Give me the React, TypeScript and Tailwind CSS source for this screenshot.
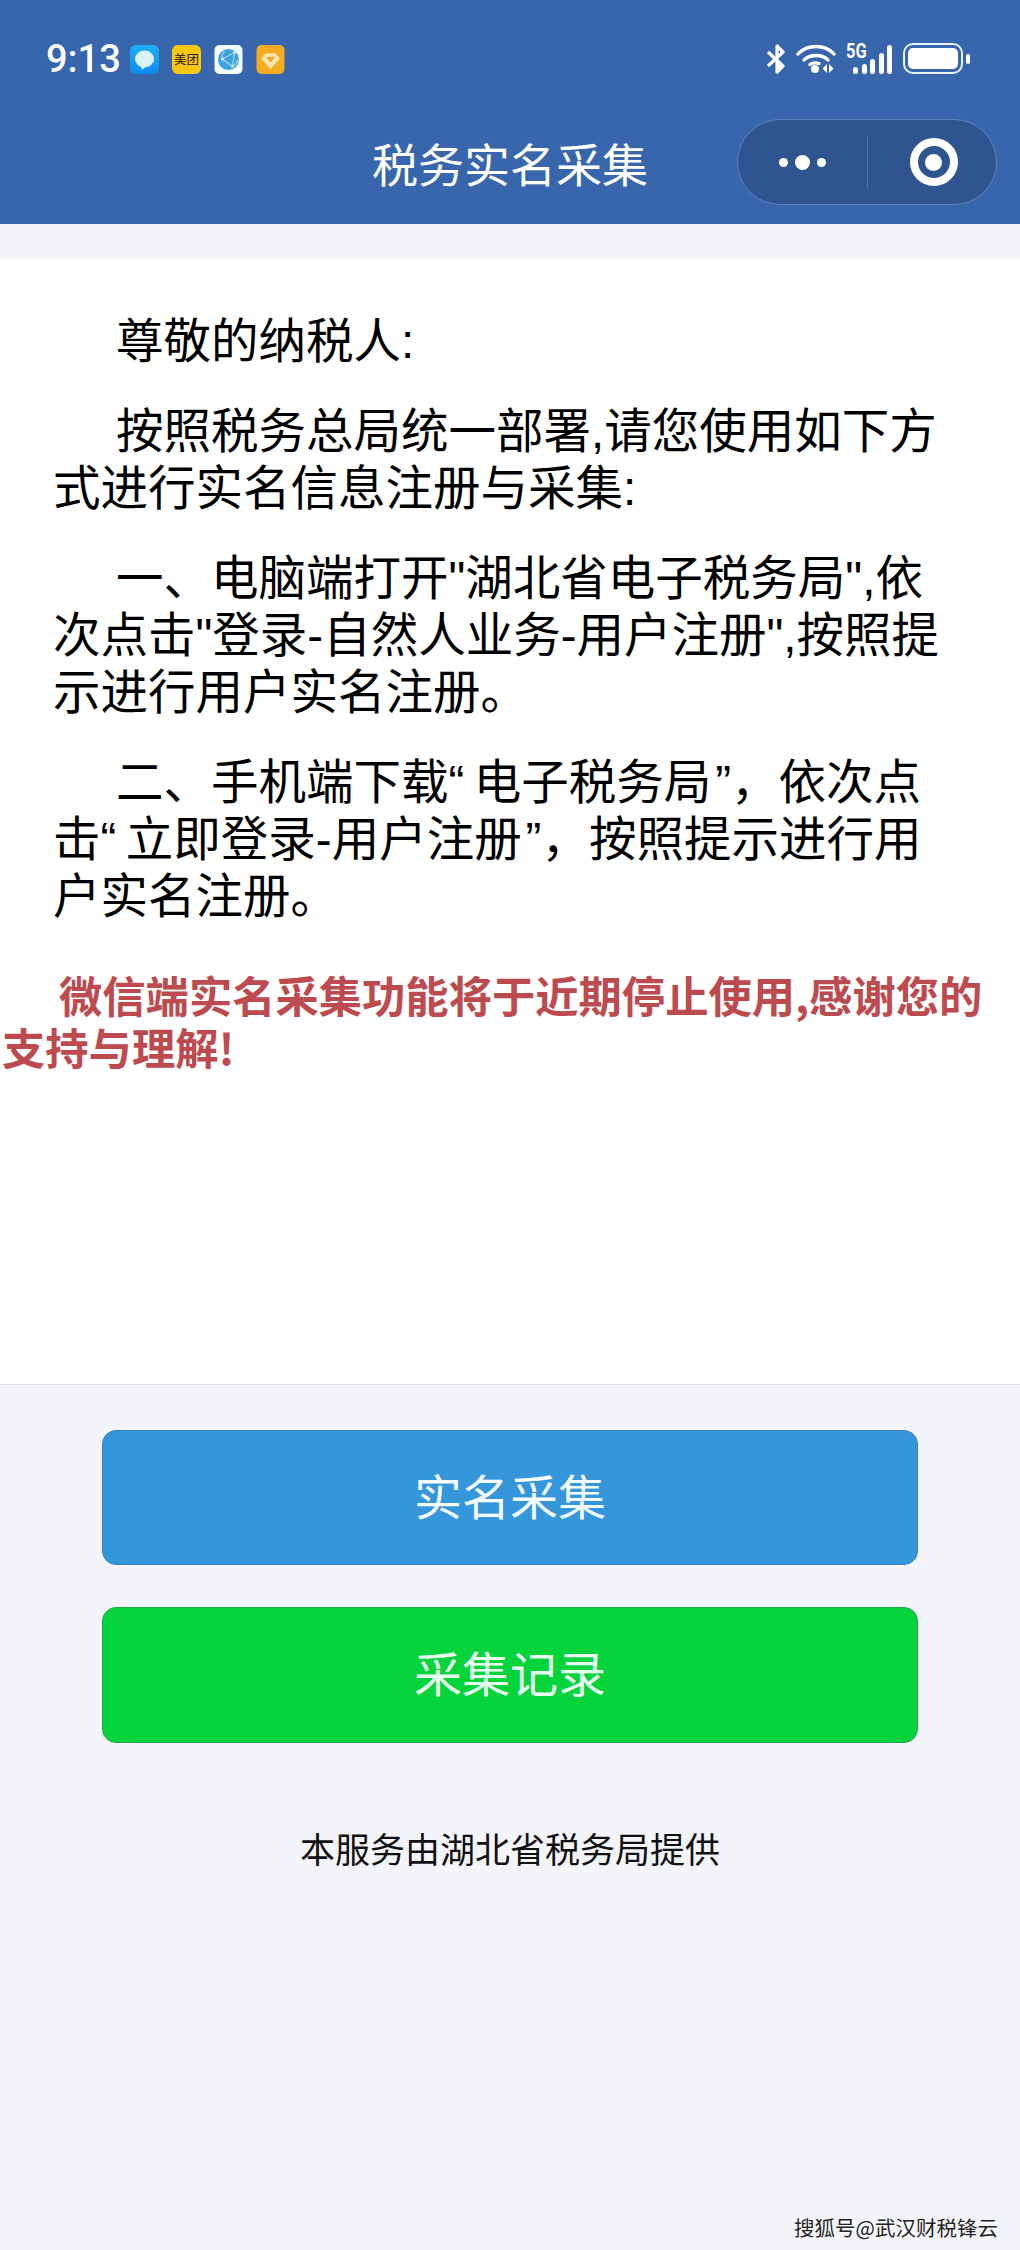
import React from 'react';

const cjk = "font-['Noto_Sans_CJK_SC','Noto_Sans',sans-serif]";

const NoticeIcons = () => (
  <div className="flex gap-[13px]">
    {/* message */}
    <svg width="29" height="29" viewBox="0 0 29 29">
      <defs>
        <linearGradient id="msg" x1="0" y1="0" x2="0" y2="1">
          <stop offset="0" stopColor="#1fb0f8" />
          <stop offset="1" stopColor="#0a8cf0" />
        </linearGradient>
      </defs>
      <rect width="29" height="29" rx="6" fill="url(#msg)" />
      <ellipse cx="14.500" cy="14" rx="9.500" ry="8.500" fill="#d8f1fb" />
      <path d="M10 20l2 4.500 4-2.500z" fill="#d8f1fb" />
    </svg>
    {/* meituan */}
    <div className={`w-[29px] h-[29px] rounded-[6px] bg-[#fcc70f] flex items-center justify-center text-[12.500px] leading-none text-[#2a1200] ${cjk}`}>
      美团
    </div>
    {/* browser */}
    <svg width="29" height="29" viewBox="0 0 28 29">
      <rect width="28" height="29" rx="5" fill="#f4fbfe" />
      <circle cx="14" cy="14.500" r="10.500" fill="#3ba4dc" />
      <path d="M20 7.500L8 14l10 7.500zM8 14c-1-3 0-6 2-7.500M18 21.500c3-1.500 5-4 5-7" fill="none" stroke="#9fd3ec" strokeWidth="1.300" />
      <circle cx="8" cy="14" r="1.500" fill="#e6f5fb" />
      <circle cx="20" cy="7.500" r="1.200" fill="#e6f5fb" />
      <circle cx="18" cy="21.500" r="1.200" fill="#e6f5fb" />
    </svg>
    {/* wallet */}
    <svg width="29" height="29" viewBox="0 0 28 29">
      <rect width="28" height="29" rx="5" fill="#f3ab1f" />
      <path d="M9.500 9h9l4 4.500L14 23 5.500 13.500z" fill="#fde6ad" strokeLinejoin="round" stroke="#fde6ad" strokeWidth="1.500" />
      <path d="M10.500 12.500h7L14 17z" fill="#f3a31c" strokeLinejoin="round" stroke="#f3a31c" strokeWidth="1" />
    </svg>
  </div>
);

const signalBars = ['h-[7px]', 'h-[10px]', 'h-[15px]', 'h-[21px]', 'h-[29px]'];

const StatusIcons = () => (
  <div className="flex items-center">
    {/* bluetooth */}
    <svg width="20" height="30" viewBox="0 0 20 30" className="mr-[10px]" fill="none" stroke="#fff" strokeWidth="3.200" strokeLinejoin="round">
      <path d="M2 8l15 14-6 6V2l6 6L2 22" />
      <path d="M12 18l4 4-4 4z" fill="#fff" stroke="none" />
    </svg>
    {/* wifi */}
    <svg width="40" height="30" viewBox="0 0 40 30" className="mr-[11px]" fill="none" stroke="#fff" strokeWidth="3.300" strokeLinecap="round">
      <path d="M2 10C11 0 29 0 38 10" />
      <path d="M8 16c6-6 18-6 24 0" />
      <path d="M14 20.500c2-1.500 6-2 9-1" />
      <circle cx="19" cy="25" r="4" fill="#fff" stroke="none" />
      <path d="M31 20l-4.500 4.500L31 29zM33 20l4.500 4.500L33 29z" fill="#fff" stroke="none" />
    </svg>
    {/* 5G + signal */}
    <div className="relative w-[45px] h-[30px] mr-[11px]">
      <span className="absolute -left-[1px] -top-[1px] text-[20px] leading-[17px] font-bold text-white font-['Roboto',sans-serif] scale-x-[0.82] origin-left">5G</span>
      <div className="absolute inset-0 flex items-end justify-end gap-[3.500px]">
        {signalBars.map((h, i) => (
          <div key={i} className={`w-[5px] rounded-full bg-white ${h}`} />
        ))}
      </div>
    </div>
    {/* battery */}
    <div className="w-[60px] h-[31px] rounded-[10px] border-[2.500px] border-[#e6f1fb] p-[3px]">
      <div className="w-full h-full rounded-[5px] bg-white" />
    </div>
    <div className="w-[4px] h-[10px] ml-[3px] rounded-full bg-white" />
  </div>
);

const Capsule = () => (
  <div className="absolute right-[23px] top-[1px] w-[260px] h-[86px] rounded-full bg-[#2e5590] border border-[#5f83bb] flex items-center">
    <div className="w-[129px] flex items-center justify-center gap-[7px]">
      <div className="w-[9px] h-[9px] rounded-full bg-white" />
      <div className="w-[15px] h-[15px] rounded-full bg-white" />
      <div className="w-[9px] h-[9px] rounded-full bg-white" />
    </div>
    <div className="w-px h-[52px] bg-[#4f75ae]" />
    <div className="flex-1 flex items-center justify-center pl-[3px]">
      <div className="w-[48px] h-[48px] rounded-full border-[8px] border-white flex items-center justify-center">
        <div className="w-[17px] h-[17px] rounded-full bg-white" />
      </div>
    </div>
  </div>
);

export default function App() {
  // Latin punctuation comes out of Liberation Sans, the hanzi fall through to Noto
  const para = "font-['Liberation_Sans','Noto_Sans_CJK_SC',sans-serif] text-[47.500px] leading-[57px] text-black indent-[63px] mb-[33px]";

  return (
    <div className={`h-[2250px] w-[1020px] flex flex-col bg-[#f4f5fa] overflow-hidden ${cjk}`}>
      <header className="bg-[#3866ac] h-[224px] shrink-0">
        <div className="h-[118px] pl-[46px] pr-[50px] pt-[43px] flex items-start justify-between">
          <div className="flex items-center h-[32px]">
            <span className="w-[84px] text-[38px] leading-none font-medium text-white font-['Roboto',sans-serif]">9:13</span>
            <NoticeIcons />
          </div>
          <StatusIcons />
        </div>
        <div className="relative h-[88px] flex items-center justify-center">
          <span className="text-[46px] leading-none text-white">税务实名采集</span>
          <Capsule />
        </div>
      </header>

      <div className="h-[35px] shrink-0" />

      <main className="h-[1126px] shrink-0 bg-white border-b border-[#e2e2e4] pt-[54px]">
        <div className="pl-[53px] pr-[60px]">
          <p className={para}>尊敬的纳税人:</p>
          <p className={para}>按照税务总局统一部署,请您使用如下方式进行实名信息注册与采集:</p>
          <p className={para}>一、电脑端打开"湖北省电子税务局",依次点击"登录-自然人业务-用户注册",按照提示进行用户实名注册。</p>
          <p className={para}>
            {'二、手机端下载“\u2009电子税务局\u200a”，依次点击“\u2009立即登录-用户注册\u200a”，按照提示进行用户实名注册。'}
          </p>
        </div>
        <p className="mt-[43px] pl-[2px] pr-[20px] text-[43.300px] leading-[52px] font-bold text-[#bd4a4e] indent-[57px]">
          微信端实名采集功能将于近期停止使用,感谢您的支持与理解!
        </p>
      </main>

      <div className="flex-1 flex flex-col px-[102px] pt-[45px]">
        <button className="h-[135px] pb-[8px] rounded-[14px] bg-[#3596da] border border-[#3a84bd] text-[48px] text-[#f2fbff]">
          实名采集
        </button>
        <button className="h-[136px] mt-[42px] pb-[8px] rounded-[14px] bg-[#05d33c] border border-[#1ea848] text-[48px] text-[#e6fff0]">
          采集记录
        </button>
        <p className="mt-[84px] text-center text-[35px] leading-[42px] text-[#111]">本服务由湖北省税务局提供</p>
        <p className="mt-auto mb-[10px] -mr-[80px] text-right text-[20.500px] leading-[26px] text-[#222] [text-shadow:1px_1px_1px_#fff]">
          搜狐号@武汉财税锋云
        </p>
      </div>
    </div>
  );
}
